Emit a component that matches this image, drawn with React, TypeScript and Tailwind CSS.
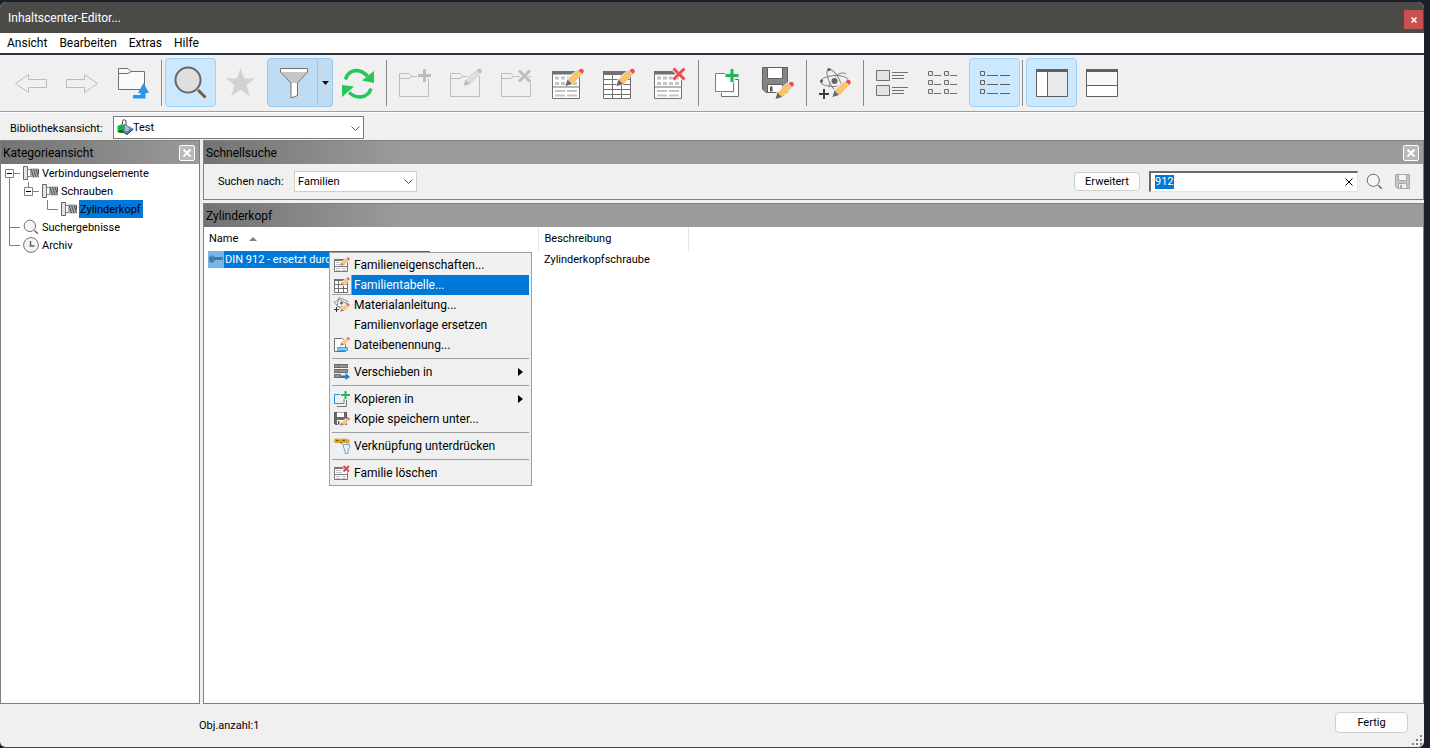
import { useEffect, useRef, useState } from "react";
import type { ReactNode } from "react";
import clsx from "clsx";

function Icon({ children, className = "size-[35px]" }: { children: ReactNode; className?: string }) {
  return (
    <svg viewBox="0 0 35 35" fill="none" className={clsx("shrink-0", className)} aria-hidden="true">
      {children}
    </svg>
  );
}

function SmallIcon({ children }: { children: ReactNode }) {
  return (
    <svg viewBox="0 0 16 16" fill="none" className="size-4 shrink-0" aria-hidden="true">
      {children}
    </svg>
  );
}

function Pencil({ y = 0, muted = false }: { y?: number; muted?: boolean }) {
  return (
    <g transform={`translate(0 ${y})`}>
      <path d="M13.5 21.5l2-8L26.500 4l5 5L21 20z" fill="#f0f0f0" opacity=".8" />
      <path d="M17.500 14.500l9-8.500 3.500 3.500-8.500 9z" fill={muted ? "#dedede" : "#fdc662"} stroke={muted ? "#cccccc" : "#e8b050"} strokeWidth=".7" />
      <path d="M14.500 21l2-6.500 4.500 4.500z" fill={muted ? "#bdbdbd" : "#666"} />
      <path d="M27.500 5.500q2.500-3 4.500-1t-1 4.500z" fill={muted ? "#bdbdbd" : "#f0494f"} />
    </g>
  );
}

function SmallPencil({ y = 0 }: { y?: number }) {
  return (
    <g transform={`translate(0 ${y})`}>
      <path d="M5.500 9l1-4L12 1l3 3-5 5z" fill="#f0f0f0" opacity=".8" />
      <path d="M7.500 5.500l4.500-4 2.500 2.500-4.500 4z" fill="#fbc873" />
      <path d="M6 8.500l1.500-3L10 8z" fill="#888" />
      <path d="M12.500 1.300l1.500-1.300 2 2-1.300 1.500z" fill="#f2606a" />
    </g>
  );
}

function MutedFolder({ children }: { children: ReactNode }) {
  return (
    <Icon>
      <path d="M1.500 31.500V8.500H11l3 3h16.500v20zM1.500 13.500H11l3-2" stroke="#bdbdbd" />
      {children}
    </Icon>
  );
}

function BackIcon() {
  return (
    <Icon>
      <path d="M1.500 18.500l13-9v5h18v8h-18v5z" stroke="#bcbcbc" />
    </Icon>
  );
}

function ForwardIcon() {
  return (
    <Icon>
      <path d="M32.500 18.500l-13-9v5h-18v8h18v5z" stroke="#bcbcbc" />
    </Icon>
  );
}

function FolderUpIcon() {
  return (
    <Icon>
      <path d="M2.500 24.500V3.500H12l3 3h13.500v18z" fill="#fafafa" stroke="#707070" />
      <path d="M2.500 8.500H12l3-2" stroke="#707070" />
      <path d="M27.500 18l5.500 10h-3.500v5.500H17v-3.500h7.500v-2H22z" fill="#2b95e9" />
    </Icon>
  );
}

function SearchIcon({ className, fill = "#dfdfdf" }: { className?: string; fill?: string }) {
  return (
    <Icon className={className}>
      <path d="M25 25l7.500 7.500" stroke="#7f5c38" strokeWidth="3" />
      <circle cx="15" cy="15" r="12.500" fill={fill} stroke="#666" strokeWidth="2" />
    </Icon>
  );
}

function StarIcon() {
  return (
    <Icon>
      <path d="M16.500 3l3.600 10.500H31L22.500 20l3.500 11.500-9.500-7-9.500 7L10.500 20 2 13.500h10.900z" fill="#d2d2d2" />
    </Icon>
  );
}

function FilterIcon() {
  return (
    <Icon>
      <path d="M5.500 3.500h27V7L22.500 18v12.500l-6.500 2.500V18L5.500 7z" fill="#fff" />
      <path d="M6 7h26L22 18h-6z" fill="#c6c6c6" />
      <path d="M5.500 3.500h27V7L22.500 18v12.500l-6.500 2.500V18L5.500 7z" stroke="#707070" />
    </Icon>
  );
}

function RefreshIcon() {
  return (
    <Icon>
      <path d="M4.500 14.500C7 5 18 2 26.500 11M30 23.500C27 33 16 34.500 8 27.500" stroke="#27c65a" strokeWidth="3.600" />
      <path d="M33 6v12l-12-2.500zM1 20l12 1.500L1 32z" fill="#27c65a" />
    </Icon>
  );
}

function FormSheet() {
  return (
    <>
      <path d="M1.500 6.500h27v27h-27z" fill="#fff" stroke="#707070" />
      <path d="M1 6h28v3.500H1zM1 21.500h28v1H1z" fill="#707070" />
      <path d="M4 11.500h4v3H4zM10 11.500h4v3h-4zM16 11.500h4v3h-4zM22 11.500h4v3h-4zM4 17h4v3H4zM10 17h4v3h-4zM16 17h4v3h-4zM22 17h4v3h-4zM4 25h10v2H4zM16 25h10v2H16zM4 29.500h10v2H4zM16 29.500h10v2H16z" fill="#c4c4c4" />
    </>
  );
}

function PropertiesIcon() {
  return (
    <Icon>
      <FormSheet />
      <Pencil />
    </Icon>
  );
}

function TableIcon() {
  return (
    <Icon>
      <path d="M1.500 6.500h27v27h-27z" fill="#fff" />
      <path d="M1.500 6.500h27v27h-27zM10.500 9v24M19.500 9v24M1 14.500h28M1 19.500h28M1 24.500h28M1 29.500h28" stroke="#707070" />
      <path d="M1 6h28v4H1z" fill="#707070" />
      <Pencil />
    </Icon>
  );
}

function DeleteFamilyIcon() {
  return (
    <Icon>
      <FormSheet />
      <path d="M20.500 3.500l11 11M31.500 3.500l-11 11" stroke="#f0f0f0" strokeWidth="5" />
      <path d="M20.500 3.500l11 11M31.500 3.500l-11 11" stroke="#f04a4e" strokeWidth="3" />
    </Icon>
  );
}

function CopyIcon() {
  return (
    <Icon>
      <path d="M11.500 14.500h17v17h-17z" fill="#fff" stroke="#707070" />
      <path d="M4 7h21v21H4z" fill="#f0f0f0" />
      <path d="M5.500 8.500h18v18h-18z" fill="#fff" stroke="#2196ec" />
      <path d="M15 10.500h14M22 3.500v14" stroke="#f0f0f0" strokeWidth="6" />
      <path d="M15.500 10.500h13M22 4v13" stroke="#22b455" strokeWidth="3" />
    </Icon>
  );
}

function SaveEditIcon() {
  return (
    <Icon>
      <path d="M1.500 2.500h25v25H5l-3.500-3.500z" fill="#858585" stroke="#606060" />
      <path d="M6.500 2.500h15v11h-15zM6.500 19.500h15v8h-15z" fill="#fff" stroke="#606060" />
      <path d="M9 21.500h2.500v5H9z" fill="#555" />
      <Pencil y={13} />
    </Icon>
  );
}

function MaterialIcon() {
  return (
    <Icon>
      <g stroke="#808080">
        <ellipse cx="16.500" cy="16" rx="13.500" ry="5.500" transform="rotate(-3 16.500 16)" />
        <ellipse cx="16.500" cy="16" rx="13" ry="5" transform="rotate(62 16.500 16)" />
        <path d="M28 9c-5-4-15 4-17.500 13" />
      </g>
      <circle cx="16.500" cy="16" r="4.500" fill="#f0f0f0" />
      <circle cx="16.500" cy="16" r="3" fill="#666" />
      <circle cx="11" cy="4.500" r="1.500" fill="#555" />
      <circle cx="3.500" cy="16" r="1.500" fill="#555" />
      <path d="M1 29h10M6 24v10" stroke="#3d3d3d" strokeWidth="2" />
      <Pencil y={11} />
    </Icon>
  );
}

function DetailViewIcon() {
  return (
    <Icon>
      <path d="M1.500 5.500h13v10h-13zM1.500 20.500h13v10h-13z" fill="#e3e3e3" stroke="#707070" />
      <path d="M17 7.500h16M17 10.500h12M17 13.500h12M17 22.500h16M17 25.500h12M17 28.500h12" stroke="#707070" />
    </Icon>
  );
}

function TileViewIcon() {
  return (
    <Icon>
      <path d="M2.500 6.500h4v4h-4zM18.500 6.500h4v4h-4zM2.500 15.500h4v4h-4zM18.500 15.500h4v4h-4zM2.500 24.500h4v4h-4zM18.500 24.500h4v4h-4z" fill="#e3e3e3" stroke="#707070" />
      <path d="M8 10.500h7M24 10.500h7M8 19.500h7M24 19.500h7M8 28.500h7M24 28.500h7" stroke="#707070" />
    </Icon>
  );
}

function ListViewIcon() {
  return (
    <Icon>
      <path d="M3.500 6.500h4v4h-4zM3.500 15.500h4v4h-4zM3.500 24.500h4v4h-4z" stroke="#606060" />
      <path d="M10 10.500h11M23 10.500h10M10 19.500h11M23 19.500h10M10 28.500h11M23 28.500h10" stroke="#606060" />
    </Icon>
  );
}

function SplitColumnsIcon() {
  return (
    <Icon>
      <path d="M2.500 4.500h31v27h-31z" fill="#fff" />
      <path d="M13.500 7H33v24H13.500z" fill="#e9e9e9" />
      <path d="M2.500 4.500h31v27h-31zM13.500 7v24" stroke="#606060" />
      <path d="M2 4h32v3H2z" fill="#606060" />
    </Icon>
  );
}

function SplitRowsIcon() {
  return (
    <Icon>
      <path d="M1.500 4.500h31v27h-31z" fill="#fff" />
      <path d="M2 7h30v13H2z" fill="#f7f7f7" />
      <path d="M1.500 4.500h31v27h-31zM2 20.500h31" stroke="#606060" />
      <path d="M1 4h32v3H1z" fill="#606060" />
    </Icon>
  );
}

function BoltIcon() {
  return (
    <SmallIcon>
      <path d="M.5 1.500h4v13h-4z" fill="#e4e4e4" stroke="#666" />
      <path d="M4.500 4.500h3v7h-3z" fill="#fff" stroke="#777" />
      <path d="M7 3.500h8.500v9H8.500L7 11z" fill="#aaa" />
      <path d="M8 4l2.500 8M10.500 4l2.500 8M13 4l2.500 8M15.500 4v5" stroke="#555" />
    </SmallIcon>
  );
}

function ClockIcon() {
  return (
    <SmallIcon>
      <circle cx="8" cy="8" r="7.400" fill="#f6f6f6" stroke="#707070" />
      <path d="M7.500 4v5h4" stroke="#606060" strokeWidth="1.500" />
    </SmallIcon>
  );
}

function LibraryIcon() {
  return (
    <svg viewBox="0 0 17 16" fill="none" className="h-4 w-[17px]" aria-hidden="true">
      <path d="M5.500 5V2.500Q5.500 1 7 .8T9 2v4" stroke="#444" />
      <path d="M7 2.500v4" stroke="#fff" />
      <path d="M.5 7L5 5l2.500 1.500V13L3 14 .5 12.500z" fill="#17b33c" />
      <path d="M.5 12.500L3 11h4.500v2L3 14z" fill="#08701f" />
      <path d="M7 4.500l9.500 5.500-6.500 5.500L6 12z" fill="#5f80a3" />
      <path d="M8 6l5 3.500-3 3-2-1z" fill="#a9c0d6" />
      <path d="M5 12.500l5 3 6.500-5.500" stroke="#1e2c3c" />
    </svg>
  );
}

function ScrewIcon() {
  return (
    <SmallIcon>
      <path d="M1 5l4-2 2 2h8v3H7l-2 3-4-1z" fill="#4c86b8" />
      <path d="M2 5l3 5M7 5v3M9.500 5v3M12 5v3" stroke="#2b628f" />
    </SmallIcon>
  );
}

function SmallPropertiesIcon() {
  return (
    <SmallIcon>
      <path d="M.5 2.500h13v12H.5z" fill="#fff" stroke="#777" />
      <path d="M0 2h14v2H0zM0 9h14v1H0z" fill="#777" />
      <path d="M2 5.500h4M2 7.500h4M10 7.500h2M2 11.500h4M8 11.500h4M2 13.500h4M8 13.500h4" stroke="#c0c0c0" />
      <SmallPencil />
    </SmallIcon>
  );
}

function SmallTableIcon() {
  return (
    <SmallIcon>
      <path d="M.5 2.500h13v13H.5z" fill="#fff" />
      <path d="M.5 2.500h13v13H.5zM4.500 4v12M9.500 4v12M0 7.500h14M0 11.500h14" stroke="#707070" />
      <path d="M0 2h14v2H0z" fill="#707070" />
      <SmallPencil />
    </SmallIcon>
  );
}

function SmallDeleteIcon() {
  return (
    <SmallIcon>
      <path d="M.5 2.500h13v12H.5z" fill="#fff" stroke="#777" />
      <path d="M0 2h14v2H0zM0 9h14v1H0z" fill="#777" />
      <path d="M2 5.500h6M2 7.500h6M2 11.500h4M8 11.500h4M2 13.500h4M8 13.500h4" stroke="#c0c0c0" />
      <path d="M9.500 1l5.500 5.500M15 1L9.500 6.500" stroke="#f0f0f0" strokeWidth="3.500" />
      <path d="M9.500 1l5.500 5.500M15 1L9.500 6.500" stroke="#f03c40" strokeWidth="1.800" />
    </SmallIcon>
  );
}

function SmallCopyIcon() {
  return (
    <SmallIcon>
      <path d="M3 15.500h9.500V9" stroke="#777" />
      <path d="M6 3.500H.5v9h9.500V8" stroke="#2196ec" />
      <path d="M7 4h9M11.500 0v8" stroke="#22b455" strokeWidth="2" />
    </SmallIcon>
  );
}

function SmallSaveIcon() {
  return (
    <SmallIcon>
      <path d="M.5 1.500h12v12h-11l-1-1z" fill="#6b6b6b" stroke="#555" />
      <path d="M3 1.500h7V6H3zM3 9h7v4.500H3z" fill="#fff" />
      <path d="M4 10h1.500v3H4z" fill="#555" />
      <SmallPencil y={6} />
    </SmallIcon>
  );
}

function SmallMaterialIcon() {
  return (
    <SmallIcon>
      <path d="M5 .5l8.500 3.500L11 12M5 .5L3 9l7 4M0 5.500L5 2l8 5M0 5.500L5 10l9-1" stroke="#909090" />
      <circle cx="7.500" cy="6" r="1.500" fill="#666" />
      <path d="M0 12.500h5M2.500 10v5" stroke="#333" />
      <SmallPencil y={6} />
    </SmallIcon>
  );
}

function FileNameIcon() {
  return (
    <SmallIcon>
      <path d="M.5 1.500h8l3 3v10H.5z" fill="#fff" stroke="#707070" />
      <path d="M3.500 10.500h10v3h-10z" fill="#8cc8f2" stroke="#4aa3e2" />
      <SmallPencil />
    </SmallIcon>
  );
}

function MoveIcon() {
  return (
    <SmallIcon>
      <path d="M0 0h14v4H0zM0 5h14v4H0zM0 10h7v4H0z" fill="#6c6c6c" />
      <path d="M1 2h3M5 2h8M1 7h3M5 7h8M1 12h5" stroke="#bcbcbc" />
      <path d="M7 11.500h4.500V9l4.500 4-4.500 3v-2H7z" fill="#2478c8" />
    </SmallIcon>
  );
}

function SuppressLinkIcon() {
  return (
    <SmallIcon>
      <path d="M1 .5h4l1.500 1L8 .5h4l1.500 1 2-.5v4l-2 .5L12 5H8L6.500 4 5 5H1L0 4V1.500z" fill="#dda52a" />
      <path d="M2 2.500h2.500M8.500 2.500H11M5.500 4l3 2" stroke="#7a540f" />
      <path d="M9.500 6.500h6v3L14 12v3.500h-3V12L9.500 9.500z" fill="#e8f2fa" stroke="#7d9ebd" />
    </SmallIcon>
  );
}

function Chevron({ className }: { className?: string }) {
  return (
    <svg viewBox="0 0 9 5" fill="none" className={clsx("pointer-events-none absolute h-[5px] w-[9px]", className)} aria-hidden="true">
      <path d="M.5.5l4 4 4-4" stroke="#555" />
    </svg>
  );
}

interface ToolButtonProps {
  label: string;
  children: ReactNode;
  active?: boolean;
}

function ToolButton({ label, children, active }: ToolButtonProps) {
  return (
    <button
      type="button"
      aria-label={label}
      className={clsx(
        "flex h-[49px] w-[51px] shrink-0 items-center justify-center rounded-sm border",
        active ? "border-[#99d1ff] bg-[#cce8ff]" : "border-transparent",
      )}
    >
      {children}
    </button>
  );
}

function ToolSeparator() {
  return <div className="mr-[3px] ml-0.5 h-[46px] w-px shrink-0 bg-[#8a8a8a]" />;
}

function Toolbar() {
  return (
    <div className="flex h-[57px] items-center border-b border-[#a0a0a0] pb-px pl-1.5" role="toolbar">
      <ToolButton label="Zurück"><BackIcon /></ToolButton>
      <ToolButton label="Vorwärts"><ForwardIcon /></ToolButton>
      <ToolButton label="Nach oben"><FolderUpIcon /></ToolButton>
      <ToolSeparator />
      <ToolButton label="Suchen" active><SearchIcon /></ToolButton>
      <ToolButton label="Favoriten"><StarIcon /></ToolButton>
      <button type="button" aria-label="Filter" className="flex h-[49px] w-[51px] shrink-0 items-center justify-center rounded-l-sm border border-[#99c9ef] bg-[#c0dcf3]">
        <FilterIcon />
      </button>
      <button type="button" aria-label="Filter auswählen" className="flex h-[49px] w-[15px] shrink-0 items-center justify-center rounded-r-sm border border-l-0 border-[#99c9ef] bg-[#c0dcf3]">
        <svg viewBox="0 0 7 4" className="h-1 w-[7px]" aria-hidden="true"><path d="M0 0h7L3.500 4z" fill="#111" /></svg>
      </button>
      <ToolButton label="Aktualisieren"><RefreshIcon /></ToolButton>
      <ToolSeparator />
      <ToolButton label="Kategorie erstellen">
        <MutedFolder>
          <path d="M19 10.500h15M26.500 3v15" stroke="#f0f0f0" strokeWidth="6" />
          <path d="M20 10.500h13M26.500 4v13" stroke="#bdbdbd" strokeWidth="3" />
        </MutedFolder>
      </ToolButton>
      <ToolButton label="Kategorie bearbeiten"><MutedFolder><Pencil muted /></MutedFolder></ToolButton>
      <ToolButton label="Kategorie löschen">
        <MutedFolder>
          <path d="M19 5.500l11 11M30 5.500l-11 11" stroke="#f0f0f0" strokeWidth="6" />
          <path d="M19 5.500l11 11M30 5.500l-11 11" stroke="#bdbdbd" strokeWidth="3" />
        </MutedFolder>
      </ToolButton>
      <ToolButton label="Familieneigenschaften"><PropertiesIcon /></ToolButton>
      <ToolButton label="Familientabelle"><TableIcon /></ToolButton>
      <ToolButton label="Familie löschen"><DeleteFamilyIcon /></ToolButton>
      <ToolSeparator />
      <ToolButton label="Kopieren in"><CopyIcon /></ToolButton>
      <ToolButton label="Kopie speichern unter"><SaveEditIcon /></ToolButton>
      <ToolSeparator />
      <ToolButton label="Materialanleitung"><MaterialIcon /></ToolButton>
      <ToolSeparator />
      <ToolButton label="Details"><DetailViewIcon /></ToolButton>
      <ToolButton label="Kacheln"><TileViewIcon /></ToolButton>
      <ToolButton label="Liste" active><ListViewIcon /></ToolButton>
      <ToolSeparator />
      <ToolButton label="Kategorieansicht" active><SplitColumnsIcon /></ToolButton>
      <ToolButton label="Geteilte Ansicht"><SplitRowsIcon /></ToolButton>
    </div>
  );
}

function PanelHeader({ title, closable }: { title: string; closable?: boolean }) {
  return (
    <div className="flex h-[23px] shrink-0 items-center justify-between bg-[#9b9b9b] bg-linear-to-r from-[#737373] from-0% to-[#9b9b9b] to-[200px] pr-1 pl-0.5">
      <h2 className="text-xs">{title}</h2>
      {closable && (
        <button type="button" aria-label={`${title} schließen`} className="flex size-4 items-center justify-center rounded-xs border border-white bg-[#b9b9b9]">
          <svg viewBox="0 0 8 8" className="size-2" aria-hidden="true">
            <path d="M.5.5l7 7M7.500.5l-7 7" stroke="#fff" strokeWidth="2" />
          </svg>
        </button>
      )}
    </div>
  );
}

interface TreeNode {
  label: string;
  icon: ReactNode;
  // box = left edge of the expander, lines = connector path
  width: string;
  lines: string;
  box?: number;
  selected?: boolean;
}

const treeNodes: TreeNode[] = [
  { label: "Verbindungselemente", icon: <BoltIcon />, width: "w-[22px]", lines: "M8.500 9v9M8.500 9.500H19", box: 4 },
  { label: "Schrauben", icon: <BoltIcon />, width: "w-[41px]", lines: "M8.500 0v18M27.500 0v9M27.500 9.500H38", box: 23 },
  { label: "Zylinderkopf", icon: <BoltIcon />, width: "w-[60px]", lines: "M8.500 0v18M46.500 0v9.500H57", selected: true },
  { label: "Suchergebnisse", icon: <SearchIcon className="size-4" fill="#f6f6f6" />, width: "w-[22px]", lines: "M8.500 0v18M8.500 9.500H19" },
  { label: "Archiv", icon: <ClockIcon />, width: "w-[22px]", lines: "M8.500 0v9.500H19" },
];

function CategoryTree() {
  return (
    <ul role="tree">
      {treeNodes.map((node) => (
        <li key={node.label} role="treeitem" aria-selected={!!node.selected} className="flex h-[18px] items-center">
          <svg fill="none" className={clsx("h-[18px] shrink-0", node.width)} aria-hidden="true">
            <path d={node.lines} stroke="#808080" />
            {node.box !== undefined && (
              <g transform={`translate(${node.box} 5)`}>
                <path d="M.5.5h8v8h-8z" fill="#fff" stroke="#808080" />
                <path d="M2 4.500h5" stroke="#000" />
              </g>
            )}
          </svg>
          {node.icon}
          <span className={clsx("ml-0.5 h-[18px] pl-px leading-[19px]", node.selected && "bg-[#0078d7] pr-0.5")}>
            {node.label}
          </span>
        </li>
      ))}
    </ul>
  );
}

interface MenuEntry {
  label: string;
  icon?: ReactNode;
  submenu?: boolean;
  highlighted?: boolean;
}

const menuGroups: MenuEntry[][] = [
  [
    { label: "Familieneigenschaften...", icon: <SmallPropertiesIcon /> },
    { label: "Familientabelle...", icon: <SmallTableIcon />, highlighted: true },
    { label: "Materialanleitung...", icon: <SmallMaterialIcon /> },
    { label: "Familienvorlage ersetzen" },
    { label: "Dateibenennung...", icon: <FileNameIcon /> },
  ],
  [{ label: "Verschieben in", icon: <MoveIcon />, submenu: true }],
  [
    { label: "Kopieren in", icon: <SmallCopyIcon />, submenu: true },
    { label: "Kopie speichern unter...", icon: <SmallSaveIcon /> },
  ],
  [{ label: "Verknüpfung unterdrücken", icon: <SuppressLinkIcon /> }],
  [{ label: "Familie löschen", icon: <SmallDeleteIcon /> }],
];

function ContextMenu() {
  return (
    <div role="menu" className="w-[203px] border border-[#a0a0a0] bg-[#f0f0f0] p-0.5 text-xs">
      {menuGroups.map((group, i) => (
        <div key={group[0].label} className={clsx(i > 0 && "mt-[3px] border-t border-[#a0a0a0] pt-[3px]")}>
          {group.map((entry) => (
            <button key={entry.label} type="button" role="menuitem" className="flex h-5 w-full items-center text-left">
              <span className={clsx("flex h-5 w-5 shrink-0 items-center justify-center border-r border-b", entry.highlighted ? "border-[#a0a0a0]" : "border-transparent")}>
                {entry.icon}
              </span>
              <span className={clsx("flex h-5 flex-1 items-center justify-between pr-1.5 pl-0.5 whitespace-nowrap", entry.highlighted && "bg-[#0078d7] text-white")}>
                {entry.label}
                {entry.submenu && (
                  <svg viewBox="0 0 5 8" className="h-2 w-[5px]" aria-hidden="true"><path d="M0 0l5 4-5 4z" fill="#000" /></svg>
                )}
              </span>
            </button>
          ))}
        </div>
      ))}
    </div>
  );
}

function QuickSearch() {
  const [query, setQuery] = useState("912");
  const inputRef = useRef<HTMLInputElement>(null);

  useEffect(() => {
    inputRef.current?.focus();
    inputRef.current?.select();
  }, []);

  return (
    <section className="shrink-0 border border-[#808080]">
      <PanelHeader title="Schnellsuche" closable />
      <div className="flex h-[35px] items-center pr-[13px] pl-3.5">
        <label htmlFor="search-type" className="w-[76px]">Suchen nach:</label>
        <div className="relative">
          <select id="search-type" className="h-[21px] w-[123px] appearance-none border border-[#cfcfcf] bg-white pt-px pl-[3px]">
            <option>Familien</option>
          </select>
          <Chevron className="top-2 right-1" />
        </div>
        <div className="ml-auto flex items-center">
          <button type="button" className="h-[19px] w-[66px] rounded-sm border border-[#d0d0d0] bg-[#fdfdfd] text-[11px]">Erweitert</button>
          <div className="ml-[9px] flex h-[21px] w-[209px] items-center border border-t-2 border-l-2 border-[#e3e3e3] border-t-[#696969] border-l-[#696969] bg-white pr-1 pl-1">
            <input
              ref={inputRef}
              aria-label="Suchbegriff"
              value={query}
              onChange={(e) => setQuery(e.target.value)}
              className="h-3.5 min-w-0 flex-1 leading-[14px] outline-none selection:bg-[#0078d7] selection:text-white"
            />
            <button type="button" aria-label="Suchbegriff löschen" onClick={() => setQuery("")}>
              <svg viewBox="0 0 8 8" className="size-2" aria-hidden="true"><path d="M.5.5l7 7M7.500.5l-7 7" stroke="#000" /></svg>
            </button>
          </div>
          <button type="button" aria-label="Suche starten" className="ml-2">
            <SearchIcon className="size-[17px]" fill="#f6f6f6" />
          </button>
          <button type="button" aria-label="Suche speichern" className="ml-3">
            <svg viewBox="0 0 15 15" fill="none" className="size-[15px]" aria-hidden="true">
              <path d="M.5.5h14v14H2.500l-2-2z" fill="#c4c4c4" stroke="#a8a8a8" />
              <path d="M3.500.5h8v6h-8zM3.500 9.500h8v5h-8z" fill="#f2f2f2" stroke="#a8a8a8" />
              <path d="M5 11h2v3H5z" fill="#a8a8a8" />
            </svg>
          </button>
        </div>
      </div>
    </section>
  );
}

function FamilyList() {
  return (
    <section className="mt-[3px] flex flex-1 flex-col border border-[#808080] bg-white">
      <PanelHeader title="Zylinderkopf" />
      <div className="relative flex-1">
        <table className="table-fixed border-collapse text-left">
          <thead>
            <tr className="h-6">
              <th className="w-[334px] border-r border-[#e5e5e5] p-0 pl-[5px] font-normal">
                <span className="flex items-center gap-[11px]">
                  Name
                  <svg viewBox="0 0 8 4" className="h-1 w-2" aria-hidden="true"><path d="M0 4h8L4 0z" fill="#808080" /></svg>
                </span>
              </th>
              <th className="w-[150px] border-r border-[#e5e5e5] p-0 pl-1.5 font-normal">Beschreibung</th>
            </tr>
          </thead>
          <tbody>
            <tr className="h-[17px]">
              <td className="p-0 pl-1">
                <div className="flex h-[17px] w-[222px] items-center bg-[#0078d7] text-white">
                  <span className="flex h-[17px] w-4 items-center bg-[#7ab5e8]"><ScrewIcon /></span>
                  <span className="pl-px">DIN 912 - ersetzt durch</span>
                </div>
              </td>
              <td className="p-0 pl-1.5">Zylinderkopfschraube</td>
            </tr>
          </tbody>
        </table>
        {/* opened on the selected family row */}
        <div className="absolute top-[25px] left-[125px] z-10">
          <ContextMenu />
        </div>
      </div>
    </section>
  );
}

export default function App() {
  return (
    <div className="flex min-h-screen flex-col bg-[#1b1f29] pt-0.5 pr-1.5 font-[Roboto,sans-serif] text-[11px] leading-4 text-black">
      <div className="flex flex-1 flex-col overflow-hidden rounded-t-md rounded-b-md border-b border-[#444] bg-[#f0f0f0]">
        <header className="flex h-[31px] shrink-0 items-center justify-between bg-[#4b4a47] pr-px pl-2 text-xs text-white">
          <h1>Inhaltscenter-Editor...</h1>
          <button type="button" aria-label="Schließen" className="mt-1 flex size-[19px] items-center justify-center bg-[#c75050]">
            <svg viewBox="0 0 6 6" className="size-1.5" aria-hidden="true"><path d="M.5.5l5 5M5.500.5l-5 5" stroke="#fff" strokeWidth="1.500" /></svg>
          </button>
        </header>
        <nav className="flex h-[22px] shrink-0 items-center gap-3 border-b-2 border-[#2b3243] bg-white pl-[7px] text-xs">
          <button type="button">Ansicht</button>
          <button type="button">Bearbeiten</button>
          <button type="button">Extras</button>
          <button type="button">Hilfe</button>
        </nav>
        <Toolbar />
        <div className="flex h-7 shrink-0 items-center border-t border-white pl-2.5">
          <label htmlFor="library-view" className="w-[103px] pt-1">Bibliotheksansicht:</label>
          <div className="relative mt-0.5">
            <select id="library-view" className="h-[23px] w-[251px] appearance-none border border-[#7a7a7a] bg-white pt-px pl-[19px]">
              <option>Test</option>
            </select>
            <div className="pointer-events-none absolute top-[3px] left-1"><LibraryIcon /></div>
            <Chevron className="top-[10px] right-1" />
          </div>
        </div>
        <main className="flex flex-1 gap-[3px]">
          <aside className="w-[200px] shrink-0 border border-[#808080] bg-white">
            <PanelHeader title="Kategorieansicht" closable />
            <CategoryTree />
          </aside>
          <div className="flex min-w-0 flex-1 flex-col">
            <QuickSearch />
            <FamilyList />
          </div>
        </main>
        <footer className="relative flex h-[43px] shrink-0 items-center justify-between pr-4 pl-[199px]">
          <span>Obj.anzahl:1</span>
          <button type="button" className="mb-1.5 h-[21px] w-[73px] rounded-sm border border-[#d0d0d0] bg-[#fdfdfd]">Fertig</button>
          <svg viewBox="0 0 10 10" className="absolute right-0.5 bottom-0.5 size-2.5" aria-hidden="true">
            <path d="M8 0h2v2H8zM4 4h2v2H4zM8 4h2v2H8zM0 8h2v2H0zM4 8h2v2H4zM8 8h2v2H8z" fill="#808080" />
          </svg>
        </footer>
      </div>
    </div>
  );
}
